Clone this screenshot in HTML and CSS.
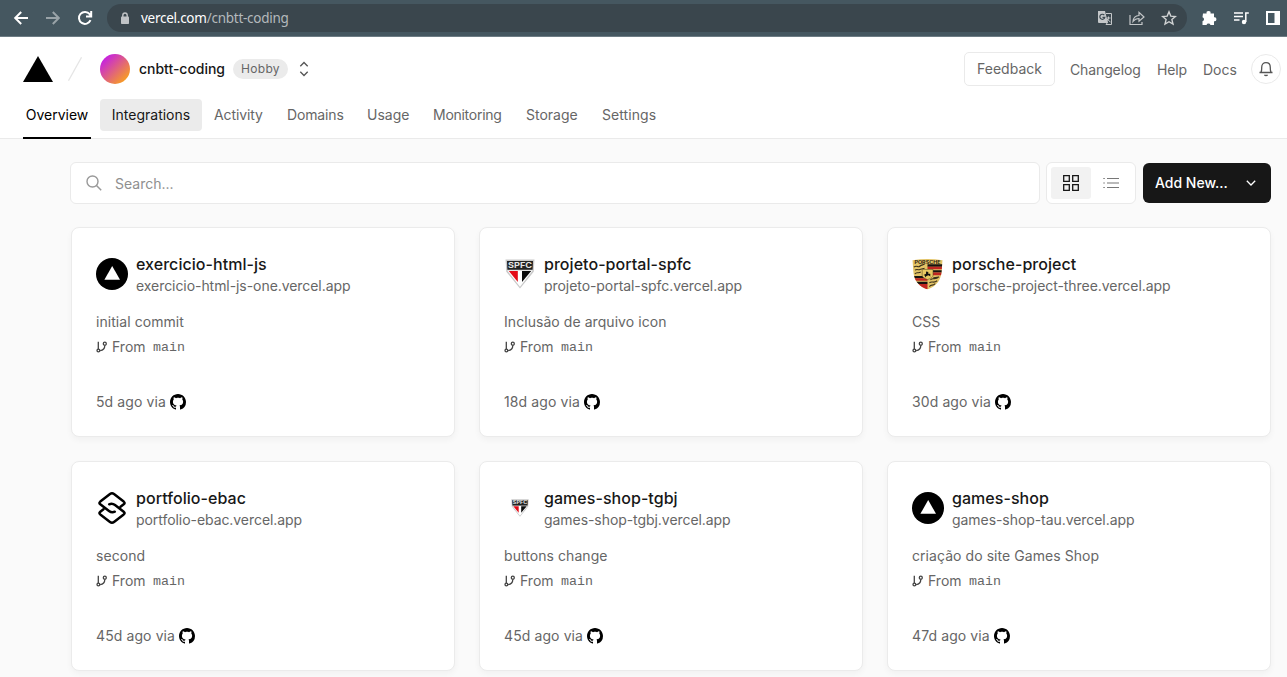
FILE: index.html
```html
<!DOCTYPE html>
<html lang="en">
<head>
<meta charset="utf-8">
<title>cnbtt-coding – Overview</title>
<link rel="stylesheet" href="styles.css">
</head>
<body>
<svg class="sprite" aria-hidden="true">
  <symbol id="github" viewBox="0 0 16 16"><path fill-rule="evenodd" d="M8 0C3.58 0 0 3.58 0 8c0 3.54 2.29 6.53 5.47 7.59.4.07.55-.17.55-.38 0-.19-.01-.82-.01-1.49-2.01.37-2.53-.49-2.69-.94-.09-.23-.48-.94-.82-1.13-.28-.15-.68-.52-.01-.53.63-.01 1.08.58 1.23.82.72 1.21 1.87.87 2.33.66.07-.52.28-.87.51-1.07-1.78-.2-3.64-.89-3.64-3.95 0-.87.31-1.59.82-2.15-.08-.2-.36-1.02.08-2.12 0 0 .67-.21 2.2.82.64-.18 1.32-.27 2-.27s1.36.09 2 .27c1.53-1.04 2.2-.82 2.2-.82.44 1.1.16 1.92.08 2.12.51.56.82 1.27.82 2.15 0 3.07-1.87 3.75-3.65 3.95.29.25.54.73.54 1.48 0 1.07-.01 1.93-.01 2.2 0 .21.15.46.55.38A8.01 8.01 0 0 0 16 8c0-4.42-3.58-8-8-8z"/></symbol>
  <symbol id="branch" viewBox="0 0 12 12"><g fill="none" stroke="#444" stroke-width="1.3"><path d="M2.300.800v7.400M8.800 4.200c0 3-1.700 5.100-4.700 5.400"/><circle cx="2.400" cy="9.500" r="1.400"/><circle cx="8.800" cy="2.700" r="1.500"/></g></symbol>
  <symbol id="vercel" viewBox="0 0 32 32"><circle cx="16" cy="16" r="16"/><path fill="#fff" d="M16.2 8 24 21.8H8.4z"/></symbol>
  <symbol id="spfc" viewBox="0 0 30 30"><path fill="#c9c9c9" d="M.5.5h29l-.8 12.2L15 29.5 1.3 12.7z"/><path fill="#fff" d="M2.3 11.5h25.4L15 27.8z"/><path fill="#222" d="M2 2h26l-.4 8.7H2.4z"/><path fill="#e40b17" d="M3.8 12h9v11z"/><path fill="#0a0a0a" d="M17 12h9.2L17 23z"/></symbol>
  <symbol id="links" viewBox="0 0 32 32"><g fill="none" stroke="#000" stroke-width="2.500" stroke-linejoin="round" stroke-linecap="round"><path d="M24.500 14.800 27.700 12.300c1.200-1 1.200-1.700 0-2.700L18 2.100c-1.400-1.100-2.600-1.100-4 0L4.300 9.600c-1.200 1-1.200 1.700 0 2.700L13 19c2 1.500 3.800 1.700 5.800.700"/><path d="M7.500 17.200 4.300 19.700c-1.200 1-1.200 1.700 0 2.700L14 29.900c1.400 1.100 2.600 1.100 4 0l9.700-7.500c1.200-1 1.200-1.700 0-2.700L19 13c-2-1.500-3.800-1.700-5.800-.700"/></g></symbol>
</svg>

<div class="browser">
  <div class="controls">
    <svg width="16" height="16" viewBox="0 0 16 16"><path d="M15 8H2.500M8.200 2 2.200 8l6 6"/></svg>
    <svg class="dim" width="16" height="16" viewBox="0 0 16 16"><path d="M1 8h12.500M7.800 2l6 6-6 6"/></svg>
    <svg width="16" height="16" viewBox="0 0 16 16"><path d="M13.500 10.200A6 6 0 1 1 12.700 4.200L14 6M14.200 1v5.500H9"/></svg>
  </div>
  <div class="omnibox">
    <svg class="lock" width="10" height="13" viewBox="0 0 10 13"><rect x="1" y="4.500" width="8" height="7.500" rx=".8" fill="#c0c3c6"/><path d="M2.800 5V3.200a2.200 2.200 0 0 1 4.400 0V5" fill="none" stroke="#c0c3c6" stroke-width="1.400"/></svg>
    <span class="address"><b>vercel.com</b>/cnbtt-coding</span>
    <div class="omni-icons">
      <svg width="16" height="16" viewBox="0 0 16 16"><path fill="#c4c7c9" d="M1 1h7l3 12H2a1 1 0 0 1-1-1z"/><path fill="none" stroke="#c4c7c9" d="M9 3.500h5.500v11H9l1.500-2M9.500 8h4M11.500 6.500V8c0 2-1 3-2 4M10 9c1 1 2 2 3.500 3"/><path fill="none" stroke="#3a474f" stroke-width="1.200" d="M7.300 5.200A2.500 2.500 0 1 0 7.800 7.300H5.500"/></svg>
      <svg width="16" height="16" viewBox="0 0 16 16"><path fill="none" stroke="#c4c7c9" stroke-width="1.200" d="M1 5v9.500h12V12M4 11.500c.4-4 2.400-5.900 6-6V2.300l5 4.700-5 4.300V8.500c-2.600 0-4.400.9-6 3z"/></svg>
      <svg width="16" height="16" viewBox="0 0 16 16"><path fill="none" stroke="#d1d3d4" stroke-width="1.400" d="m8 1.800 1.800 4.300 4.600.4-3.500 3.100 1.100 4.500-4-2.400-4 2.400 1.100-4.500-3.500-3.100 4.600-.4z"/></svg>
    </div>
  </div>
  <div class="tools">
    <svg width="16" height="16" viewBox="0 0 16 16"><path fill="#fff" d="M2 3.500h3.600a2 2 0 1 1 3.900 0H13v3.800a2 2 0 1 1 0 3.900V15H9.500a2.100 2.100 0 0 0-4 0H1.500v-3.800a2 2 0 0 0 0-3.900z"/></svg>
    <svg width="17" height="14" viewBox="0 0 17 14"><path fill="none" stroke="#fff" stroke-width="1.500" d="M1 2h9M1 5.500h9M1 9h5.500M12.800 11V2h3"/><circle cx="11" cy="11" r="2.200" fill="#fff"/></svg>
    <svg width="14" height="14" viewBox="0 0 14 14"><path fill="#fff" fill-rule="evenodd" d="M0 0h14v14H0zM2 2v10h6.500V2z"/></svg>
  </div>
</div>

<header class="header">
  <div class="account">
    <svg class="logo" width="30" height="26" viewBox="0 0 30 26"><path d="M15 0l15 26H0z"/></svg>
    <svg class="slash" width="14" height="24" viewBox="0 0 14 24"><path d="M13.500.3.500 23.700" stroke="#e5e5e5" stroke-width="1.200"/></svg>
    <span class="avatar"></span>
    <span class="team">cnbtt-coding</span>
    <span class="plan">Hobby</span>
    <svg class="updown" width="10" height="16" viewBox="0 0 10 16"><path d="M1.300 5.300 5 1.500l3.700 3.800M1.300 10.700 5 14.500l3.700-3.800" fill="none" stroke="#555" stroke-width="1.300"/></svg>
    <div class="links">
      <a class="feedback">Feedback</a>
      <a class="l-change">Changelog</a>
      <a class="l-help">Help</a>
      <a class="l-docs">Docs</a>
      <span class="bell"><svg width="16" height="16" viewBox="0 0 16 16"><path d="M1.500 11.500h13M3 11.200c.8-1.300.7-2.600.7-4.700 0-3 1.700-4.800 4.300-4.800s4.300 1.800 4.300 4.800c0 2.100-.1 3.400.7 4.700M6.300 14q1.700 1 3.400 0" fill="none" stroke="#555" stroke-width="1.300"/></svg></span>
    </div>
  </div>
  <nav class="tabs">
    <a class="tab active t-overview">Overview</a>
    <a class="tab hover t-integrations">Integrations</a>
    <a class="tab t-activity">Activity</a>
    <a class="tab t-domains">Domains</a>
    <a class="tab t-usage">Usage</a>
    <a class="tab t-monitoring">Monitoring</a>
    <a class="tab t-storage">Storage</a>
    <a class="tab t-settings">Settings</a>
  </nav>
</header>

<main>
  <div class="toolbar">
    <div class="search">
      <svg width="16" height="16" viewBox="0 0 16 16"><circle cx="6.500" cy="6.500" r="5.500" fill="none" stroke="#999" stroke-width="1.400"/><path d="m10.500 10.500 4.700 4.700" stroke="#999" stroke-width="1.500"/></svg>
      <span>Search...</span>
    </div>
    <div class="switch">
      <span class="view on"><svg width="16" height="16" viewBox="0 0 16 16"><path d="M.7.700h5.600v5.600H.7zM9.700.700h5.600v5.600H9.700zM.7 9.700h5.600v5.600H.7zM9.700 9.700h5.600v5.600H9.700z" fill="none" stroke="#171717" stroke-width="1.300"/></svg></span>
      <span class="view"><svg width="16" height="12" viewBox="0 0 16 12"><path d="M4 1.500h12M4 6h12M4 10.500h12M.3 1.500h1.500M.3 6h1.500M.3 10.500h1.500" stroke="#777" stroke-width="1.200"/></svg></span>
    </div>
    <div class="add"><span>Add New...</span><svg width="10" height="6" viewBox="0 0 10 6"><path d="m.8.8 4.200 4.200L9.200.8" fill="none" stroke="#fff" stroke-width="1.300"/></svg></div>
  </div>

  <div class="grid">
    <article class="card">
      <div class="head"><svg class="icon"><use href="#vercel"/></svg><div><h2>exercicio-html-js</h2><p class="url">exercicio-html-js-one.vercel.app</p></div></div>
      <p class="commit">initial commit</p>
      <p class="from"><svg width="12" height="12"><use href="#branch"/></svg><span>From</span><code>main</code></p>
      <p class="ago"><span>5d ago via</span><svg width="16" height="16"><use href="#github"/></svg></p>
    </article>
    <article class="card">
      <div class="head"><svg class="icon inset" viewBox="0 0 30 30"><use href="#spfc"/><text class="crest" x="15" y="9.100" textLength="24" lengthAdjust="spacingAndGlyphs">SPFC</text></svg><div><h2>projeto-portal-spfc</h2><p class="url">projeto-portal-spfc.vercel.app</p></div></div>
      <p class="commit">Inclusão de arquivo icon</p>
      <p class="from"><svg width="12" height="12"><use href="#branch"/></svg><span>From</span><code>main</code></p>
      <p class="ago"><span>18d ago via</span><svg width="16" height="16"><use href="#github"/></svg></p>
    </article>
    <article class="card">
      <div class="head">
        <svg class="icon shield" viewBox="0 0 32 32">
          <clipPath id="shield"><path d="M.5 1.700Q16-.700 31.500 1.700C30 14 33 25 16 32-1 25 2 14 .5 1.700z"/></clipPath>
          <g clip-path="url(#shield)">
            <path fill="#e3c467" d="M0 0h32v32H0z"/>
            <path fill="#161311" d="M16 6h16v2.500H16zM16 12h16v2.500H16zM0 18h16v2.400H0zM0 24h16v2.400H0z"/>
            <path fill="#c12622" d="M16 8.500h16V11H16zM16 14.500h16v2.800H16zM0 20.400h16V23H0zM0 26.400h16V32H0z"/>
            <path fill="none" stroke="#3a301c" stroke-width="1.100" d="M2 9c3-3 4 1 6-1s3-1 5-2M3 12c3-2 4 1 6-1l4-1M3 16c2-3 3 0 6-2M19 22c3-3 4 1 9-3M18 25c3-2 4 1 8-2M18 29c2-3 3 0 6-3M22 20l6-1"/>
          </g>
          <path fill="#e8c862" stroke="#4a3a18" stroke-width=".5" d="M10.500 11.300h11.200v6c0 2-2.400 3.400-5.600 4.400-3.200-1-5.600-2.400-5.600-4.400z"/>
          <path fill="#111" d="m14.500 13.500 2.500.5-.5 1.500 3 .5-1 .8.800 1.700-2.500-1.200-1.800.7-1.500 1.500v-1.700L12 17l2.500-1.200z"/>
          <text class="crest maker" x="16" y="5.300" textLength="27" lengthAdjust="spacingAndGlyphs">PORSCHE</text>
        </svg>
        <div><h2>porsche-project</h2><p class="url">porsche-project-three.vercel.app</p></div>
      </div>
      <p class="commit">CSS</p>
      <p class="from"><svg width="12" height="12"><use href="#branch"/></svg><span>From</span><code>main</code></p>
      <p class="ago"><span>30d ago via</span><svg width="16" height="16"><use href="#github"/></svg></p>
    </article>
    <article class="card">
      <div class="head"><svg class="icon"><use href="#links"/></svg><div><h2>portfolio-ebac</h2><p class="url">portfolio-ebac.vercel.app</p></div></div>
      <p class="commit">second</p>
      <p class="from"><svg width="12" height="12"><use href="#branch"/></svg><span>From</span><code>main</code></p>
      <p class="ago"><span>45d ago via</span><svg width="16" height="16"><use href="#github"/></svg></p>
    </article>
    <article class="card">
      <div class="head"><svg class="icon small" viewBox="0 0 30 30"><use href="#spfc"/><text class="crest" x="15" y="9.100" textLength="24" lengthAdjust="spacingAndGlyphs">SPFC</text></svg><div><h2>games-shop-tgbj</h2><p class="url">games-shop-tgbj.vercel.app</p></div></div>
      <p class="commit">buttons change</p>
      <p class="from"><svg width="12" height="12"><use href="#branch"/></svg><span>From</span><code>main</code></p>
      <p class="ago"><span>45d ago via</span><svg width="16" height="16"><use href="#github"/></svg></p>
    </article>
    <article class="card">
      <div class="head"><svg class="icon"><use href="#vercel"/></svg><div><h2>games-shop</h2><p class="url">games-shop-tau.vercel.app</p></div></div>
      <p class="commit">criação do site Games Shop</p>
      <p class="from"><svg width="12" height="12"><use href="#branch"/></svg><span>From</span><code>main</code></p>
      <p class="ago"><span>47d ago via</span><svg width="16" height="16"><use href="#github"/></svg></p>
    </article>
  </div>
</main>
</body>
</html>
```
FILE: styles.css
```css
* { box-sizing: border-box; }
body {
  margin: 0;
  height: 677px;
  overflow: hidden;
  background: #fafafa;
  color: #666;
  font: 14px/20px Inter, "Liberation Sans", sans-serif;
}
svg { display: block; flex: none; }
.sprite { position: absolute; width: 0; height: 0; }
h2, p { margin: 0; }
a, span, h2, p, code { white-space: nowrap; }

.browser {
  display: flex;
  align-items: center;
  height: 37px;
  background: #455760;
  border-bottom: 1px solid #6d7c84;
}
.controls { display: flex; gap: 16px; width: 107px; padding-left: 13px; }
.controls path { fill: none; stroke: #fff; stroke-width: 2; }
.controls .dim { opacity: .45; }
.omnibox {
  display: flex;
  align-items: center;
  width: 1080px;
  height: 28px;
  padding: 0 10px 0 13px;
  border-radius: 14px;
  background: #3a464d;
}
.address {
  margin-left: 11px;
  color: #b4b9bc;
  font: 13.5px/20px "Noto Sans", sans-serif;
  letter-spacing: -.26px;
}
.address b { color: #fff; font-weight: 400; }
.omni-icons { display: flex; gap: 16px; margin-left: auto; }
.tools { display: flex; align-items: center; gap: 16px; margin-left: 14px; }

.header { height: 102px; background: #fff; border-bottom: 1px solid #eaeaea; }
.account { display: flex; align-items: center; height: 62px; padding: 2px 7px 0 23px; }
.slash { margin-left: 15px; }
.avatar {
  width: 30px;
  height: 30px;
  margin-left: 18px;
  border-radius: 50%;
  background: linear-gradient(135deg, #c41ee6 12%, #f9a01f 88%);
}
.team { width: 86px; margin-left: 9px; color: #171717; font-weight: 500; letter-spacing: -.03px; }
.plan {
  width: 55px;
  height: 20px;
  margin-left: 8px;
  border-radius: 10px;
  background: #ebebeb;
  font-size: 12px;
  letter-spacing: .3px;
  text-align: center;
}
.updown { margin-left: 11px; }
.links { display: flex; align-items: center; margin-left: auto; }
.links a { padding-top: 2px; }
.links .feedback {
  width: 91px;
  height: 34px;
  margin-right: 15px;
  padding-top: 0;
  border: 1px solid #eaeaea;
  border-radius: 5px;
  line-height: 32px;
  text-align: center;
}
.l-change { width: 87px; letter-spacing: -.12px; }
.l-help { width: 46px; letter-spacing: -.15px; }
.l-docs { width: 48px; }
.bell {
  display: grid;
  place-items: center;
  width: 30px;
  height: 30px;
  margin-right: -1px;
  border: 1px solid #eaeaea;
  border-radius: 50%;
}
.tabs { display: flex; height: 40px; padding-left: 23px; }
.tab { height: 32px; line-height: 32px; }
.active { height: 40px; border-bottom: 2px solid #000; color: #000; }
.hover { border-radius: 4px; background: #ebebeb; color: #171717; }
.t-overview { width: 68px; text-align: center; }
.t-integrations { width: 102px; margin: 0 12px 0 9px; text-align: center; }
.t-activity { width: 73px; letter-spacing: -.1px; }
.t-domains { width: 80px; letter-spacing: -.15px; }
.t-usage { width: 66px; }
.t-monitoring { width: 93px; letter-spacing: -.27px; }
.t-storage { width: 76px; }
.t-settings { letter-spacing: .08px; }

main { padding: 23px 16px 0 70px; }
.toolbar { display: flex; align-items: center; }
.search {
  display: flex;
  align-items: center;
  gap: 13px;
  width: 970px;
  height: 42px;
  padding-left: 15px;
  border: 1px solid #eaeaea;
  border-radius: 6px;
  background: #fff;
  color: #8f8f8f;
}
.search span { padding-top: 2px; }
.switch {
  display: flex;
  width: 90px;
  height: 42px;
  margin: 0 7px 0 6px;
  padding: 4px;
  border: 1px solid #eaeaea;
  border-radius: 6px;
  background: #fff;
}
.view { display: grid; place-items: center; width: 40px; height: 32px; border-radius: 3px; }
.on { background: #f2f2f2; }
.add {
  display: flex;
  align-items: center;
  justify-content: space-between;
  width: 128px;
  height: 40px;
  padding: 0 15px 0 12px;
  border-radius: 6px;
  background: #171717;
  color: #fff;
  font-weight: 500;
}

.grid {
  display: grid;
  grid-template-columns: repeat(3, 384px);
  gap: 24px;
  margin: 23px 0 0 1px;
}
.card {
  height: 210px;
  padding: 25px 24px;
  border: 1px solid #ebebeb;
  border-radius: 8px;
  background: #fff;
  box-shadow: 0 3px 6px rgba(0, 0, 0, .04);
}
.head { display: flex; gap: 8px; height: 44px; }
.icon { width: 32px; height: 32px; margin-top: 5px; }
.inset { padding: 1px; }
.shield { padding: 0 1px 0 0; }
.small { padding: 7px; }
.crest { fill: #e4e4e4; font-size: 7.6px; font-weight: 700; text-anchor: middle; }
.maker { fill: #2b220f; font-size: 4.5px; }
h2 { color: #171717; font-size: 16px; font-weight: 500; line-height: 22px; letter-spacing: .05px; }
.url { line-height: 22px; letter-spacing: -.06px; }
.commit { margin-top: 15px; font-weight: 400; letter-spacing: .06px; }
.from { display: flex; align-items: center; height: 20px; margin-top: 5px; }
.from span { width: 41px; margin-left: 4px; }
.from code { padding-top: 2px; font: 13.3px/20px "Liberation Mono", monospace; }
.ago { display: flex; align-items: center; gap: 4px; margin-top: 35px; letter-spacing: .1px; }
```
